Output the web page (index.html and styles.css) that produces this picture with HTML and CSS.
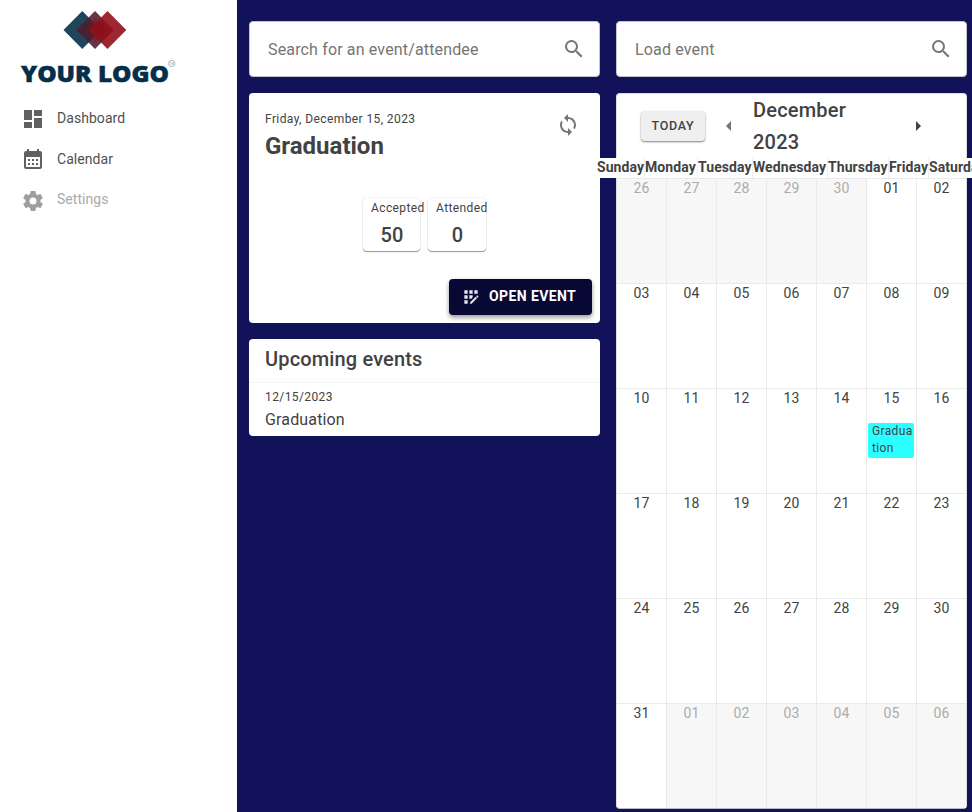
FILE: index.html
```html
<!DOCTYPE html>
<html lang="en">
<head>
<meta charset="utf-8">
<title>Events dashboard</title>
<link rel="stylesheet" href="styles.css">
</head>
<body>
<div class="app">
  <aside class="sidebar">
    <svg class="logo" width="237" height="98" viewBox="0 0 237 98">
      <path d="M82.3 11l18.8 19-18.8 19-18.8-19z" fill="#1f455b"/>
      <path d="M95 11l18.8 19L95 49 76.200 30z" fill="#4f1c30" fill-opacity=".88"/>
      <path d="M107.500 11l18.800 19-18.800 19-18.800-19z" fill="#930f1b" fill-opacity=".9"/>
      <path d="M95 17.300l12.500 12.700L95 42.700 88.700 30z" fill="#8a0e18" fill-opacity=".5"/>
      <text class="logo-name" x="21" y="81.500" textLength="148" lengthAdjust="spacingAndGlyphs">YOUR LOGO</text>
      <circle cx="171.700" cy="63.500" r="3.200" fill="none" stroke="#8b9da9" stroke-width=".7"/>
      <text class="logo-mark" x="169.500" y="65">TM</text>
    </svg>
    <nav class="menu">
      <a class="menu-item"><svg width="24" height="24" viewBox="0 0 24 24"><path d="M13 3v6h8V3m-8 18h8V11h-8M3 21h8v-6H3m0-2h8V3H3v10z"/></svg>Dashboard</a>
      <a class="menu-item"><svg width="24" height="24" viewBox="0 0 24 24"><path d="M7 11h2v2H7v-2m14-6v14a2 2 0 0 1-2 2H5a2 2 0 0 1-2-2V5a2 2 0 0 1 2-2h1V1h2v2h8V1h2v2h1a2 2 0 0 1 2 2M5 19h14V9H5v10m10-6v-2h2v2h-2m-4 0v-2h2v2h-2m-4 2h2v2H7v-2m8 2v-2h2v2h-2m-4 0v-2h2v2h-2z"/></svg>Calendar</a>
      <a class="menu-item disabled"><svg width="24" height="24" viewBox="0 0 24 24"><path d="M12 15.500A3.500 3.500 0 0 1 8.500 12 3.500 3.500 0 0 1 12 8.500a3.500 3.500 0 0 1 3.500 3.500 3.500 3.500 0 0 1-3.500 3.500m7.430-2.530c.040-.320.070-.640.070-.970s-.030-.660-.070-1l2.110-1.630c.190-.150.240-.420.120-.640l-2-3.460c-.120-.220-.390-.310-.610-.220l-2.490 1c-.520-.390-1.060-.730-1.690-.980l-.370-2.650A.506.506 0 0 0 14 2h-4c-.250 0-.460.180-.500.420l-.370 2.650c-.630.250-1.170.590-1.690.980l-2.490-1c-.220-.090-.490 0-.610.220l-2 3.460c-.130.220-.070.490.120.640L4.570 11c-.040.340-.070.670-.070 1s.030.650.070.970l-2.110 1.660c-.190.150-.250.420-.120.640l2 3.460c.120.220.390.300.610.220l2.490-1.010c.520.400 1.060.740 1.690.990l.370 2.650c.040.240.250.420.500.420h4c.250 0 .460-.180.500-.420l.370-2.650c.630-.260 1.170-.590 1.690-.990l2.490 1.010c.220.080.490 0 .610-.220l2-3.460c.120-.220.070-.490-.120-.640l-2.110-1.660z"/></svg>Settings</a>
    </nav>
  </aside>
  <main class="content">
    <section class="column">
      <div class="search"><span>Search for an event/attendee</span><svg width="24" height="24" viewBox="0 0 24 24"><path d="M15.500 14h-.790l-.280-.270A6.471 6.471 0 0 0 16 9.500 6.500 6.500 0 1 0 9.500 16c1.610 0 3.090-.590 4.230-1.570l.270.280v.790l5 4.990L20.490 19l-4.990-5zm-6 0C7.010 14 5 11.990 5 9.500S7.010 5 9.500 5 14 7.010 14 9.500 11.990 14 9.500 14z"/></svg></div>
      <article class="card event">
        <header class="event-head">
          <div>
            <div class="caption">Friday, December 15, 2023</div>
            <h1>Graduation</h1>
          </div>
          <svg class="refresh" width="24" height="24" viewBox="0 0 24 24"><path d="M12 4V1L8 5l4 4V6c3.310 0 6 2.690 6 6 0 1.010-.250 1.970-.700 2.800l1.460 1.460A7.930 7.930 0 0 0 20 12c0-4.420-3.580-8-8-8zm0 14c-3.310 0-6-2.690-6-6 0-1.010.250-1.970.700-2.800L5.240 7.740A7.930 7.930 0 0 0 4 12c0 4.420 3.580 8 8 8v3l4-4-4-4v3z"/></svg>
        </header>
        <div class="stats">
          <div class="stat accepted"><span class="caption">Accepted</span><strong>50</strong></div>
          <div class="stat attended"><span class="caption">Attended</span><strong>0</strong></div>
        </div>
        <button class="open"><svg width="20" height="20" viewBox="0 0 24 24"><path d="M10 4h4v4h-4zM4 16h4v4H4zM4 10h4v4H4zM4 4h4v4H4zM14 12.420V10h-4v4h2.420zM20.880 11.290l-1.170-1.170a.410.410 0 0 0-.580 0l-.880.880L20 12.750l.880-.880a.410.410 0 0 0 0-.580zM11 18.250V20h1.750l6.670-6.670-1.750-1.750zM16 4h4v4h-4z"/></svg><span>OPEN EVENT</span></button>
      </article>
      <article class="card upcoming">
        <h2>Upcoming events</h2>
        <div class="upcoming-item">
          <div class="caption">12/15/2023</div>
          <div class="upcoming-name">Graduation</div>
        </div>
      </article>
    </section>
    <section class="column">
      <div class="search"><span>Load event</span><svg width="24" height="24" viewBox="0 0 24 24"><path d="M15.500 14h-.790l-.280-.270A6.471 6.471 0 0 0 16 9.500 6.500 6.500 0 1 0 9.500 16c1.610 0 3.090-.590 4.230-1.570l.270.280v.790l5 4.990L20.490 19l-4.990-5zm-6 0C7.010 14 5 11.990 5 9.500S7.010 5 9.500 5 14 7.010 14 9.500 11.990 14 9.500 14z"/></svg></div>
      <article class="card calendar">
        <header class="calendar-head">
          <button class="today">TODAY</button>
          <svg class="prev" width="5" height="10" viewBox="0 0 5 10"><path d="M5 0v10L0 5z"/></svg>
          <h2>December 2023</h2>
          <svg class="next" width="5" height="10" viewBox="0 0 5 10"><path d="M0 0v10l5-5z"/></svg>
        </header>
        <div class="weekdays"><span>Sunday</span><span>Monday</span><span>Tuesday</span><span>Wednesday</span><span>Thursday</span><span>Friday</span><span>Saturday</span></div>
        <div class="days">
          <div class="out">26</div><div class="out">27</div><div class="out">28</div><div class="out">29</div><div class="out">30</div><div>01</div><div>02</div>
          <div>03</div><div>04</div><div>05</div><div>06</div><div>07</div><div>08</div><div>09</div>
          <div>10</div><div>11</div><div>12</div><div>13</div><div>14</div><div>15<span class="entry">Graduation</span></div><div>16</div>
          <div>17</div><div>18</div><div>19</div><div>20</div><div>21</div><div>22</div><div>23</div>
          <div>24</div><div>25</div><div>26</div><div>27</div><div>28</div><div>29</div><div>30</div>
          <div>31</div><div class="out">01</div><div class="out">02</div><div class="out">03</div><div class="out">04</div><div class="out">05</div><div class="out">06</div>
        </div>
      </article>
    </section>
  </main>
</div>
</body>
</html>
```
FILE: styles.css
```css
* { box-sizing: border-box; }
body { margin: 0; font-family: Roboto, sans-serif; color: #424242; overflow: hidden; }
h1, h2 { margin: 0; }
svg { display: block; flex: none; }
button { font-family: inherit; border: 0; }

.app { display: flex; width: 972px; height: 812px; background: #12125a; }
.sidebar { width: 237px; flex: none; background: #fff; }
.logo-name { font: 800 22px "Open Sans", sans-serif; fill: #052f49; stroke: #052f49; stroke-width: .5px; }
.logo-mark { font: 3px "Liberation Sans", sans-serif; fill: #8b9da9; }
.menu { display: flex; flex-direction: column; }
.menu-item { display: flex; align-items: center; gap: 12px; height: 41px; padding: 0 0 2px 21px; font-size: 14px; letter-spacing: .05px; color: #505050; }
.menu-item svg { fill: #616161; margin-top: 3px; }
.menu-item.disabled { color: #aaa; height: 40px; }
.menu-item.disabled svg { fill: #9e9e9e; }

.content { flex: 1; min-width: 0; display: flex; gap: 16px; padding: 21px 5px 0 12px; }
.column { width: 351px; flex: none; display: flex; flex-direction: column; gap: 16px; }
.search { display: flex; align-items: center; justify-content: space-between; height: 56px; padding: 0 13px 0 18px; background: #fff; border: 1px solid #c4c4c8; border-radius: 4px; font-size: 16px; letter-spacing: .15px; color: #757575; }
.search svg { fill: #757575; }
.card { background: #fff; border-radius: 4px; }
.caption { font-size: 12px; line-height: 20px; letter-spacing: .4px; }

.event { height: 230px; padding: 16px 8px 8px 16px; display: flex; flex-direction: column; }
.event-head { display: flex; justify-content: space-between; }
.event-head h1 { font-size: 24px; line-height: 32px; font-weight: 700; margin-top: 1px; }
.refresh { fill: #757575; margin: 4px 12px 0 0; }
.stats { display: flex; gap: 8px; margin: 36px 0 0 98px; }
.stat { height: 53px; padding: 3px 0 0 8px; border-radius: 4px; box-shadow: 0 1px 1px rgba(0,0,0,.4), 0 0 2px rgba(0,0,0,.14); display: flex; flex-direction: column; white-space: nowrap; }
.accepted { width: 57px; }
.attended { width: 58px; }
.stat .caption { line-height: 14px; }
.stat strong { font-size: 20px; line-height: 32px; font-weight: 500; letter-spacing: .25px; margin: 4px 0 0 -7px; text-align: center; }
.open { display: flex; align-items: center; gap: 8px; align-self: flex-end; width: 143px; height: 36px; margin-top: auto; padding: 0 0 0 12px; border-radius: 4px; background: #080834; color: #fff; font-size: 14px; font-weight: 700; letter-spacing: .4px; box-shadow: 0 3px 4px rgba(0,0,0,.28), 0 1px 5px rgba(0,0,0,.16); }
.open svg { fill: #e6e6ee; }
.open span { padding-bottom: 2px; }

.upcoming { height: 97px; }
.upcoming h2 { height: 43px; padding-left: 16px; font-size: 20px; line-height: 41px; font-weight: 500; letter-spacing: .15px; }
.upcoming-item { border-top: 1px solid #f6f6f6; padding: 4px 16px; }
.upcoming-name { font-size: 16px; line-height: 26px; letter-spacing: .15px; }

.calendar { height: 716px; border: 1px solid #ddd; border-bottom-color: #bbb; }
.calendar-head { display: flex; align-items: center; height: 64px; padding-left: 24px; }
.today { width: 64px; height: 30px; margin-bottom: 1px; padding: 0 0 1px; border-radius: 4px; background: #efefef; color: #424242; font-size: 12.500px; font-weight: 500; letter-spacing: .7px; box-shadow: 0 1px 2px rgba(0,0,0,.5); }
.prev { margin-left: 21px; fill: #757575; }
.next { fill: #424242; }
.calendar-head h2 { width: 140px; margin: 0 23px 0 22px; font-size: 20px; line-height: 32px; font-weight: 500; letter-spacing: .2px; }
.weekdays { display: grid; grid-template-columns: 48px 53px 55px 75px 61px 40px 62px; width: max-content; height: 20px; margin-left: -20px; background: #fff; font-size: 14px; line-height: 19px; font-weight: 700; letter-spacing: .08px; }
.weekdays span { border-right: 1px solid #eee; }
.days { display: grid; grid-template-columns: repeat(7, 50px); grid-auto-rows: 105px; width: 349px; overflow: hidden; font-size: 14px; line-height: 18px; letter-spacing: .25px; text-align: center; }
.days > div { border-top: 1px solid #eaeaea; border-right: 1px solid #eaeaea; }
.days .out { background: #f7f7f7; color: #acacac; }
.entry { display: block; width: 46px; height: 35px; margin: 16px 0 0 1px; padding: 0 0 0 4px; border-radius: 2px; background: #2bffff; font-size: 12px; line-height: 17px; letter-spacing: .35px; text-align: left; word-break: break-all; }
```
